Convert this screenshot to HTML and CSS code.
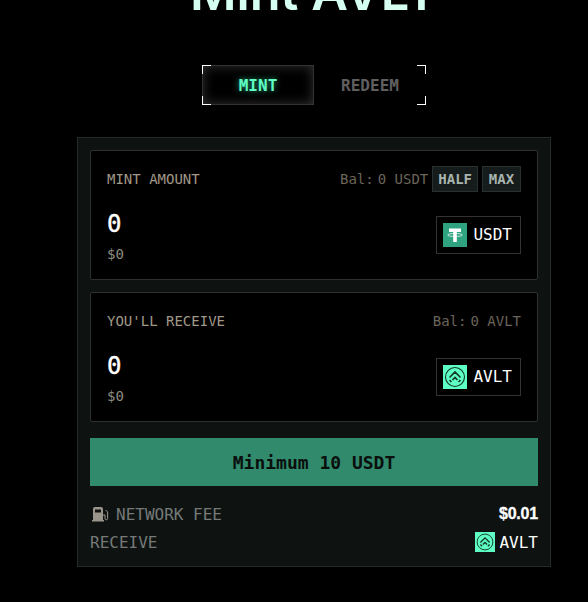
FILE: index.html
```html
<!DOCTYPE html>
<html lang="en">
<head>
<meta charset="UTF-8">
<title>Mint AVLT</title>
<link rel="stylesheet" href="styles.css">
</head>
<body>
<div class="page">
  <h1 class="title">Mint AVLT</h1>

  <div class="tabs">
    <i class="corner tl"></i><i class="corner tr"></i><i class="corner bl"></i><i class="corner br"></i>
    <button class="tab active">MINT</button>
    <button class="tab">REDEEM</button>
  </div>

  <div class="card">
    <div class="box">
      <div class="box-top">
        <span class="label">MINT AMOUNT</span>
        <div class="bal">
          <span>Bal:</span><span>0 USDT</span>
          <button class="pill">HALF</button>
          <button class="pill">MAX</button>
        </div>
      </div>
      <div class="box-main">
        <div>
          <div class="amount">0</div>
          <div class="usd">$0</div>
        </div>
        <div class="token">
          <svg class="token-icon" viewBox="0 0 24 24"><rect width="24" height="24" fill="#2fa27f"/><path d="M6 5.500h12v3.500h-4.200v10h-3.600V9H6z" fill="#fff"/><ellipse cx="12" cy="12" rx="7.500" ry="1.500" fill="none" stroke="#fff" stroke-width=".7"/></svg>
          <span>USDT</span>
        </div>
      </div>
    </div>

    <div class="box">
      <div class="box-top">
        <span class="label">YOU'LL RECEIVE</span>
        <div class="bal">
          <span>Bal:</span><span>0 AVLT</span>
        </div>
      </div>
      <div class="box-main">
        <div>
          <div class="amount">0</div>
          <div class="usd">$0</div>
        </div>
        <div class="token">
          <svg class="token-icon" viewBox="0 0 24 24"><rect width="24" height="24" fill="#5effc3"/><circle cx="12" cy="12" r="9.500" fill="none" stroke="#14352b" stroke-width="1.100"/><path d="M6.500 12.500L12 7l5.500 5.500M9.500 15l2.500-2.500 2.500 2.500M6.500 15l2 2M17.500 15l-2 2" fill="none" stroke="#14352b" stroke-width="1.600"/></svg>
          <span>AVLT</span>
        </div>
      </div>
    </div>

    <button class="submit">Minimum 10 USDT</button>

    <div class="row">
      <span class="row-label">
        <svg class="pump" viewBox="0 0 20 20"><path d="M3 5q0-2 2-2h6q2 0 2 2v11h1v1.500H2V16h1z" fill="#9a958a"/><rect x="5" y="5.500" width="6" height="3" fill="#0e1312"/><path d="M13 11h2v3.500a1.300 1.300 0 0 0 2.600 0V8l-2-2" fill="none" stroke="#9a958a" stroke-width="1"/></svg>
        NETWORK FEE
      </span>
      <span class="fee">$0.01</span>
    </div>
    <div class="row">
      <span class="row-label">RECEIVE</span>
      <span class="row-token">
        <svg class="row-icon" viewBox="0 0 24 24"><rect width="24" height="24" fill="#5effc3"/><circle cx="12" cy="12" r="9.500" fill="none" stroke="#14352b" stroke-width="1.100"/><path d="M6.500 12.500L12 7l5.500 5.500M9.500 15l2.500-2.500 2.500 2.500M6.500 15l2 2M17.500 15l-2 2" fill="none" stroke="#14352b" stroke-width="1.600"/></svg>
        AVLT
      </span>
    </div>
  </div>
</div>
</body>
</html>
```

FILE: styles.css
```css
html, body{
  margin:0;
  padding:0;
  height:100%;
  overflow:hidden;
  background:#000;
  color:#fff;
  font-family:"DejaVu Sans Mono", monospace;
  font-size:14px;
}

button{
  font-family:inherit;
  cursor:pointer;
}

.page{
  display:flex;
  flex-direction:column;
  align-items:center;
  width:474px;
  margin-left:77px;
  margin-top:-38px;
}

.title{
  margin:0;
  height:60px;
  line-height:60px;
  font-family:"Inter", sans-serif;
  font-size:50.500px;
  font-weight:600;
  color:#d5fff0;
  white-space:nowrap;
}

.tabs{
  position:relative;
  display:flex;
  margin-top:43px;
  width:224px;
  height:40px;
}

.corner{
  position:absolute;
  width:8px;
  height:8px;
  border:0 solid #fff;
}
.tl{left:0;top:0;border-width:1px 0 0 1px;}
.tr{right:0;top:0;border-width:1px 1px 0 0;}
.bl{left:0;bottom:0;border-width:0 0 1px 1px;}
.br{right:0;bottom:0;border-width:0 1px 1px 0;}

.tab{
  flex:1;
  border:1px solid transparent;
  background:none;
  color:#5f5f5f;
  font-size:16px;
  font-weight:bold;
}

.tab.active{
  flex:0 0 112px;
  border-color:#333;
  color:#5effc3;
  box-shadow:inset 0 0 12px #333;
  text-shadow:0 0 6px #26a17b;
}

.card{
  box-sizing:border-box;
  width:474px;
  height:430px;
  margin-top:32px;
  padding:12px;
  background:#0e1312;
  border:1px solid #262b2a;
  display:flex;
  flex-direction:column;
}

.box{
  box-sizing:border-box;
  flex:0 0 130px;
  margin-bottom:12px;
  padding:15px 16px 0;
  background:#000;
  border:1px solid #2e3130;
  border-radius:2px;
}

.box-top{
  display:flex;
  justify-content:space-between;
  align-items:center;
  height:26px;
}

.label{
  color:#a09888;
}

.bal{
  display:flex;
  align-items:center;
  gap:4px;
  color:#6b6459;
}

.pill{
  min-width:39px;
  height:26px;
  padding:0 5px;
  background:#161c1b;
  border:1px solid #2a302e;
  color:#a8b4ae;
  font-size:14px;
  font-weight:bold;
}

.box-main{
  display:flex;
  justify-content:space-between;
  align-items:center;
  margin-top:17px;
}

.amount{
  font-size:24px;
  line-height:30px;
  color:#fff;
  -webkit-text-stroke:.4px #fff;
}

.usd{
  margin-top:7px;
  color:#8d8d80;
  line-height:16px;
}

.token{
  display:flex;
  align-items:center;
  gap:6px;
  box-sizing:border-box;
  height:38px;
  margin-bottom:2px;
  padding:0 8px 0 6px;
  border:1px solid #333;
  font-size:16px;
}

.token-icon{
  width:24px;
  height:24px;
}

.submit{
  flex:0 0 48px;
  margin-top:4px;
  margin-bottom:14px;
  background:#318a6c;
  border:0;
  color:#0a0f0d;
  font-size:18px;
  font-weight:bold;
}

.row{
  display:flex;
  justify-content:space-between;
  align-items:center;
  flex:0 0 28px;
}

.row-label{
  display:flex;
  align-items:center;
  gap:6px;
  color:#757a78;
  font-size:16px;
}

.pump{
  width:20px;
  height:20px;
}

.fee{
  font-family:"Liberation Sans", sans-serif;
  font-size:16px;
  font-weight:bold;
  letter-spacing:-.2px;
  -webkit-text-stroke:.3px #fff;
}

.row-token{
  display:flex;
  align-items:center;
  gap:4px;
  font-size:16px;
}

.row-icon{
  width:20px;
  height:20px;
}
```
